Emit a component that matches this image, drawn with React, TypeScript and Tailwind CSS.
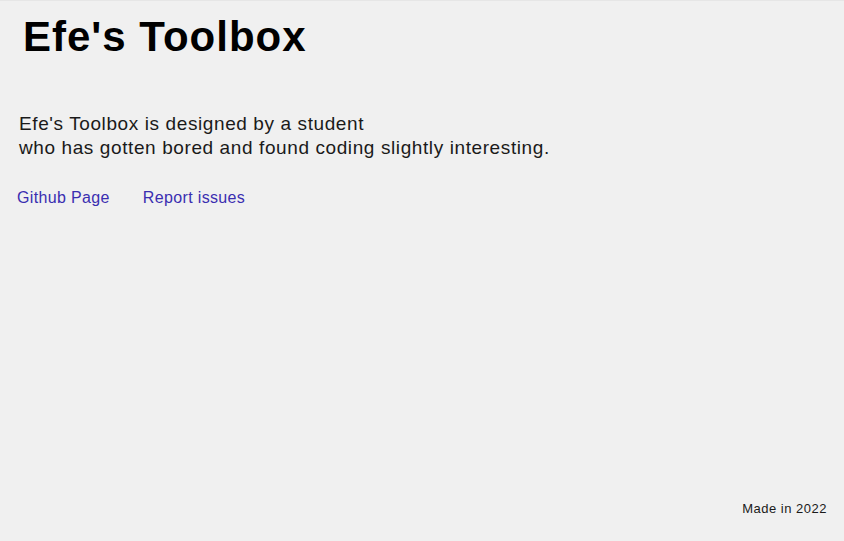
export default function App() {
  return (
    <div className="flex h-[541px] flex-col bg-[#f0f0f0] font-['Liberation_Sans',Arial,sans-serif] text-[#1a1a1a]">
      <div className="h-px bg-[#e6e6e6]" />
      <h1 className="ml-[23px] mt-[13px] text-[42px] font-bold leading-[46px] tracking-[1px] text-black">Efe's Toolbox</h1>
      <p className="ml-[19px] mt-[52px] text-[19px] leading-[24px] tracking-[0.6px]">
        Efe's Toolbox is designed by a student
        <br />
        who has gotten bored and found coding slightly interesting.
      </p>
      <div className="ml-[17px] mt-[28px] flex gap-[33px] text-[16px] leading-[20px] tracking-[0.35px] text-[#3a2eb0]">
        <a href="#">Github Page</a>
        <a href="#">Report issues</a>
      </div>
      <div className="mt-auto mb-[24px] mr-[17px] self-end text-[13px] leading-[16px] tracking-[0.5px]">Made in 2022</div>
    </div>
  )
}
